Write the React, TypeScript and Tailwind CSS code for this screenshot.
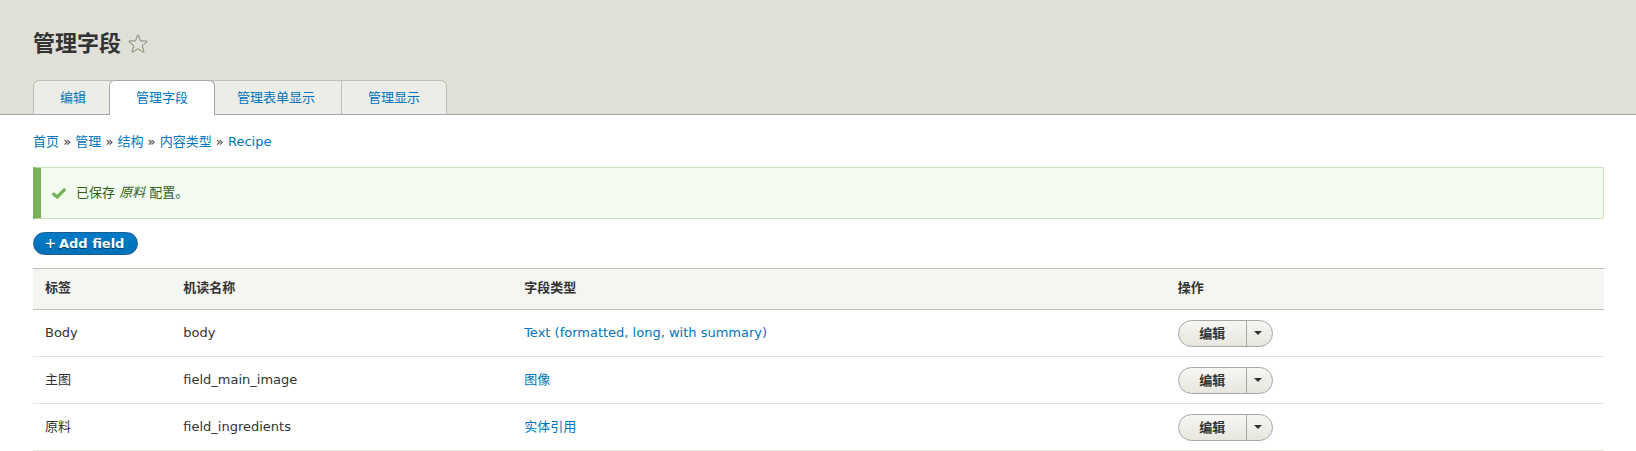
const tabs = [
  { label: '编辑', active: false, style: 'rounded-tl-md border-l' },
  { label: '管理字段', active: true, style: '' },
  { label: '管理表单显示', active: false, style: 'border-l' },
  { label: '管理显示', active: false, style: 'rounded-tr-md border-l border-r' },
];

const crumbs = ['首页', '管理', '结构', '内容类型', 'Recipe'];

const fields = [
  { label: 'Body', name: 'body', type: 'Text (formatted, long, with summary)' },
  { label: '主图', name: 'field_main_image', type: '图像' },
  { label: '原料', name: 'field_ingredients', type: '实体引用' },
];

function Star() {
  return (
    <svg width="20" height="20" viewBox="0 0 20 20" fill="none" stroke="#85876f" strokeLinejoin="round" aria-hidden="true">
      <path d="M10 .9c.3 0 .5.3.7.8l1.800 5.200 5.900.1c.9 0 1.100.5.4 1.100l-4.600 3.500 1.700 5.800c.2.8-.2 1.200-.9.7l-5-3.400-5 3.400c-.7.5-1.100.1-.9-.7l1.700-5.800L1.200 8.100C.5 7.500.7 7 1.600 7l5.900-.1 1.800-5.200c.2-.5.4-.8.7-.8z" />
    </svg>
  );
}

function Operations({ name }: { name: string }) {
  return (
    <div className="inline-flex h-[27px] overflow-hidden rounded-full border border-[#a6a6a6] bg-linear-to-b from-[#f6f6f3] to-[#e7e7df] text-[#333]">
      <button type="button" className="w-[67px] text-[13px] leading-[25px] font-bold">编辑</button>
      <button type="button" aria-label={`${name} 更多操作`} className="flex w-[26px] items-center justify-center border-l border-[#a6a6a6] pr-0.5">
        <svg width="8" height="4" viewBox="0 0 8 4" aria-hidden="true">
          <path d="M0 0h8L4 4z" fill="#333" />
        </svg>
      </button>
    </div>
  );
}

export default function App() {
  return (
    <div className="bg-white font-['DejaVu_Sans','Noto_Sans_CJK_SC',sans-serif] text-[13px] leading-5 text-[#333]">
      <header className="border-b border-[#a6a6a6] bg-[#e0e0d8] pt-7 pr-8 pl-[33px]">
        <div className="flex items-center gap-[7px]">
          <h1 className="text-[22px] leading-8 font-bold">管理字段</h1>
          <button type="button" aria-label="收藏">
            <Star />
          </button>
        </div>
        <nav className="-mb-px flex pt-5" aria-label="标签页">
          {tabs.map((tab) =>
            tab.active ? (
              <a key={tab.label} href="#" aria-current="page" className="z-10 -mr-[5px] -ml-[3px] h-[35px] rounded-t-md border border-b-0 border-[#a6a6a6] bg-white px-[26px] pt-[7px] text-[#0074bd]">
                {tab.label}
              </a>
            ) : (
              <a key={tab.label} href="#" className={`h-[35px] border-t border-b border-t-[#bfbfba] border-r-[#bfbfba] border-b-[#a6a6a6] border-l-[#bfbfba] bg-[#edede8] px-[26px] pt-[7px] text-[#0074bd] ${tab.style}`}>
                {tab.label}
              </a>
            ),
          )}
        </nav>
      </header>

      <main className="pt-[17px] pr-8 pl-[33px]">
        <nav aria-label="面包屑">
          <ol className="flex">
            {crumbs.map((crumb, i) => (
              <li key={crumb}>
                {i > 0 && <span className="whitespace-pre"> » </span>}
                <a href="#" className="text-[#0074bd]">{crumb}</a>
              </li>
            ))}
          </ol>
        </nav>

        <div role="status" className="mt-[15px] flex h-[52px] items-center gap-[9px] rounded-r-xs border border-l-8 border-[#c9e1bd] border-l-[#77b259] bg-[#f3faef] pl-[10px] text-[#325e1c]">
          <svg width="16" height="16" viewBox="0 0 16 16" aria-hidden="true">
            <path d="M1.700 8.200 6.200 12 14.300 3.900" fill="none" stroke="#73b355" strokeWidth="3.200" />
          </svg>
          <p>已保存 <em>原料</em> 配置。</p>
        </div>

        <a href="#" className="mt-[13px] flex h-[23px] w-fit items-center rounded-full border border-[#1e5c90] bg-linear-to-b from-[#007bc6] to-[#0071b8] pr-[13px] pl-3 font-bold text-white [text-shadow:0_1px_rgba(0,0,0,0.5)]">
          <svg className="mr-1 drop-shadow-[0_1px_rgba(0,0,0,0.5)]" width="9" height="9" viewBox="0 0 9 9" aria-hidden="true">
            <path d="M4.500 0v9M0 4.500h9" stroke="#fff" strokeWidth="1.600" />
          </svg>
          Add field
        </a>

        <table className="mt-[13px] w-full table-fixed border-separate border-spacing-0 text-left">
          <thead>
            <tr className="bg-[#f5f5f2]">
              <th className="w-[8.8%] border-y border-[#bfbfba] px-3 pt-[9px] pb-[11px]">标签</th>
              <th className="w-[21.7%] border-y border-[#bfbfba] px-3 pt-[9px] pb-[11px]">机读名称</th>
              <th className="w-[41.6%] border-y border-[#bfbfba] px-3 pt-[9px] pb-[11px]">字段类型</th>
              <th className="border-y border-[#bfbfba] px-3 pt-[9px] pb-[11px]">操作</th>
            </tr>
          </thead>
          <tbody>
            {fields.map((field) => (
              <tr key={field.name} className="h-[47px]">
                <td className="border-b border-[#e6e4df] px-3">{field.label}</td>
                <td className="border-b border-[#e6e4df] px-3">{field.name}</td>
                <td className="border-b border-[#e6e4df] px-3">
                  <a href="#" className="text-[#0074bd]">{field.type}</a>
                </td>
                <td className="border-b border-[#e6e4df] px-3">
                  <div className="flex">
                    <Operations name={field.label} />
                  </div>
                </td>
              </tr>
            ))}
          </tbody>
        </table>
      </main>
    </div>
  );
}
